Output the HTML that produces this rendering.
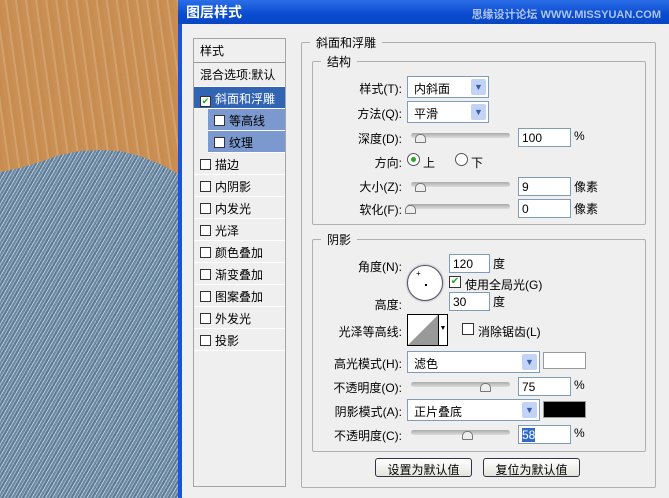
<!DOCTYPE html><html><head><meta charset="utf-8"><style>
*{margin:0;padding:0;box-sizing:border-box}
body{width:669px;height:498px;overflow:hidden;position:relative;font-family:"Liberation Sans","Noto Sans CJK SC",sans-serif;font-size:12px;color:#000;background:#ece9e4}
.a{position:absolute}
.leather{left:0;top:0;width:180px;height:498px;background:repeating-linear-gradient(82deg,#c98f54 0 4px,#d4a06a 4px 6px,#c78c50 6px 10px)}
.denim{left:0;top:0;width:180px;height:498px;background:repeating-linear-gradient(-60deg,#6c88a2 0 2px,#b4c8d8 2px 3px,#5d7a95 3px 5px,#98b0c5 5px 6px);clip-path:polygon(0 172px,20px 168px,40px 162px,60px 155px,80px 151px,100px 150px,120px 151px,140px 156px,160px 164px,180px 175px,180px 498px,0 498px)}
.dlg{left:178px;top:0;width:491px;height:498px;background:#efefef;border-left:4px solid #1a55d8}
.title{left:178px;top:0;width:491px;height:24px;background:linear-gradient(#2b6ee8,#0a4bd0 60%,#0847c4);color:#fff;font-weight:bold;font-size:14px;padding:2px 0 0 8px}
.wm{right:8px;top:6px;color:#aec4f0;font-size:11px;font-weight:bold}
.list{left:193px;top:38px;width:93px;height:449px;border:1px solid #a5a5a5;background:#efefef}
.row{position:absolute;left:0;width:91px;height:22px;border-bottom:1px solid #fff;padding:3px 0 0 6px;white-space:nowrap}
.cb{display:inline-block;width:11px;height:11px;border:1px solid #333;background:#fff;vertical-align:-1px;margin-right:4px}
fieldset{position:absolute;border:1px solid #b0b0b0;border-radius:2px}
legend{padding:0 6px;margin-left:8px;font-size:12px}
.lbl{position:absolute;text-align:right;width:100px;white-space:nowrap}
.sel{position:absolute;height:22px;border:1px solid #7f9db9;background:#fff;padding:3px 6px}
.sel i{position:absolute;right:2px;top:2px;width:15px;height:16px;background:#c3d3f5;border-radius:2px;font-style:normal;font-size:9px;color:#3a5da8;text-align:center;line-height:16px}
.inp{position:absolute;height:19px;border:1px solid #7f9db9;background:#fff;padding:2px 3px}
.tr{position:absolute;height:5px;background:linear-gradient(#aaa,#ddd);border-radius:3px}
.th{position:absolute;width:11px;height:9px;background:#eee;border:1px solid #777;border-radius:5px 5px 1px 1px}
.btn{position:absolute;height:19px;border:1px solid #334;border-radius:3px;background:linear-gradient(#fff,#e4e4dc);text-align:center;padding-top:2px}
</style></head><body>
<div class="a leather"></div><div class="a denim"></div>
<div class="a dlg"></div>
<div class="a title">图层样式<span class="a wm">思缘设计论坛 WWW.MISSYUAN.COM</span></div>
<div class="a list">
<div class="row" style="top:0;height:24px;border-bottom:1px solid #999">样式</div>
<div class="row" style="top:24px;height:24px">混合选项:默认</div>
<div class="row" style="top:48px;background:#3264b4;color:#fff"><span class="cb" style="background:#fff;color:#2a2;font-size:9px;line-height:9px;text-align:center">✔</span>斜面和浮雕</div>
<div class="row" style="top:70px;left:14px;width:77px;background:#7b99cf"><span class="cb"></span>等高线</div>
<div class="row" style="top:92px;left:14px;width:77px;background:#7b99cf"><span class="cb"></span>纹理</div>
<div class="row" style="top:114px"><span class="cb"></span>描边</div>
<div class="row" style="top:136px"><span class="cb"></span>内阴影</div>
<div class="row" style="top:158px"><span class="cb"></span>内发光</div>
<div class="row" style="top:180px"><span class="cb"></span>光泽</div>
<div class="row" style="top:202px"><span class="cb"></span>颜色叠加</div>
<div class="row" style="top:224px"><span class="cb"></span>渐变叠加</div>
<div class="row" style="top:246px"><span class="cb"></span>图案叠加</div>
<div class="row" style="top:268px"><span class="cb"></span>外发光</div>
<div class="row" style="top:290px"><span class="cb"></span>投影</div>
</div>
<fieldset style="left:301px;top:34px;width:355px;height:454px"><legend>斜面和浮雕</legend></fieldset>
<fieldset style="left:312px;top:53px;width:334px;height:172px"><legend>结构</legend></fieldset>
<fieldset style="left:312px;top:231px;width:334px;height:221px"><legend>阴影</legend></fieldset>
<div class="lbl" style="left:302px;top:80px">样式(T):</div>
<div class="sel" style="left:407px;top:76px;width:82px">内斜面<i>▼</i></div>
<div class="lbl" style="left:302px;top:105px">方法(Q):</div>
<div class="sel" style="left:407px;top:101px;width:82px">平滑<i>▼</i></div>
<div class="lbl" style="left:302px;top:130px">深度(D):</div>
<div class="tr" style="left:411px;top:133px;width:99px"></div><div class="th" style="left:415px;top:134px"></div>
<div class="inp" style="left:518px;top:128px;width:53px">100</div><div class="a" style="left:574px;top:129px">%</div>
<div class="lbl" style="left:302px;top:154px">方向:</div>
<div class="a" style="left:407px;top:153px;width:13px;height:13px;border:1px solid #555;border-radius:50%;background:#fff"><div class="a" style="left:3px;top:3px;width:5px;height:5px;border-radius:50%;background:#2a2"></div></div>
<div class="a" style="left:423px;top:154px">上</div>
<div class="a" style="left:455px;top:153px;width:13px;height:13px;border:1px solid #555;border-radius:50%;background:#fff"></div>
<div class="a" style="left:471px;top:154px">下</div>
<div class="lbl" style="left:302px;top:178px">大小(Z):</div>
<div class="tr" style="left:411px;top:182px;width:99px"></div><div class="th" style="left:415px;top:183px"></div>
<div class="inp" style="left:518px;top:177px;width:53px">9</div><div class="a" style="left:574px;top:178px">像素</div>
<div class="lbl" style="left:302px;top:201px">软化(F):</div>
<div class="tr" style="left:407px;top:204px;width:103px"></div><div class="th" style="left:405px;top:205px"></div>
<div class="inp" style="left:518px;top:199px;width:53px">0</div><div class="a" style="left:574px;top:200px">像素</div>
<div class="lbl" style="left:302px;top:258px">角度(N):</div>
<div class="a" style="left:407px;top:265px;width:36px;height:36px;border:1px solid #556;border-radius:50%;background:#fff;box-shadow:0 0 2px #889"><div class="a" style="left:17px;top:18px;width:2px;height:2px;background:#000"></div><div class="a" style="left:8px;top:3px;font-size:8px">+</div></div>
<div class="inp" style="left:449px;top:254px;width:41px">120</div><div class="a" style="left:493px;top:255px">度</div>
<div class="a" style="left:449px;top:276px;width:12px;height:12px;border:1px solid #333;background:#fff;color:#2a2;font-size:10px;line-height:10px;text-align:center">✔</div>
<div class="a" style="left:465px;top:276px">使用全局光(G)</div>
<div class="lbl" style="left:302px;top:296px">高度:</div>
<div class="inp" style="left:449px;top:292px;width:41px">30</div><div class="a" style="left:493px;top:293px">度</div>
<div class="lbl" style="left:302px;top:323px">光泽等高线:</div>
<div class="a" style="left:407px;top:314px;width:41px;height:32px;border:1px solid #000;background:#fff"><svg width="30" height="30" class="a" style="left:0;top:0"><path d="M0 30L30 0V30Z" fill="#999"/></svg><div class="a" style="left:30px;top:0;width:9px;height:30px;border-left:1px solid #000;font-size:7px;text-align:center;line-height:28px">▼</div></div>
<div class="a" style="left:462px;top:323px;width:12px;height:12px;border:1px solid #333;background:#fff"></div>
<div class="a" style="left:478px;top:323px">消除锯齿(L)</div>
<div class="lbl" style="left:302px;top:355px">高光模式(H):</div>
<div class="sel" style="left:407px;top:351px;width:133px">滤色<i>▼</i></div>
<div class="a" style="left:543px;top:352px;width:43px;height:17px;border:1px solid #999;background:#fff"></div>
<div class="lbl" style="left:302px;top:379px">不透明度(O):</div>
<div class="tr" style="left:411px;top:382px;width:99px"></div><div class="th" style="left:480px;top:383px"></div>
<div class="inp" style="left:518px;top:377px;width:53px">75</div><div class="a" style="left:574px;top:378px">%</div>
<div class="lbl" style="left:302px;top:403px">阴影模式(A):</div>
<div class="sel" style="left:407px;top:399px;width:133px">正片叠底<i>▼</i></div>
<div class="a" style="left:543px;top:401px;width:43px;height:17px;border:1px solid #999;background:#000"></div>
<div class="lbl" style="left:302px;top:427px">不透明度(C):</div>
<div class="tr" style="left:411px;top:430px;width:99px"></div><div class="th" style="left:462px;top:431px"></div>
<div class="inp" style="left:518px;top:425px;width:53px"><span style="background:#316ac5;color:#fff">58</span></div><div class="a" style="left:574px;top:426px">%</div>
<div class="btn" style="left:375px;top:458px;width:97px">设置为默认值</div>
<div class="btn" style="left:483px;top:458px;width:97px">复位为默认值</div>
</body></html>
